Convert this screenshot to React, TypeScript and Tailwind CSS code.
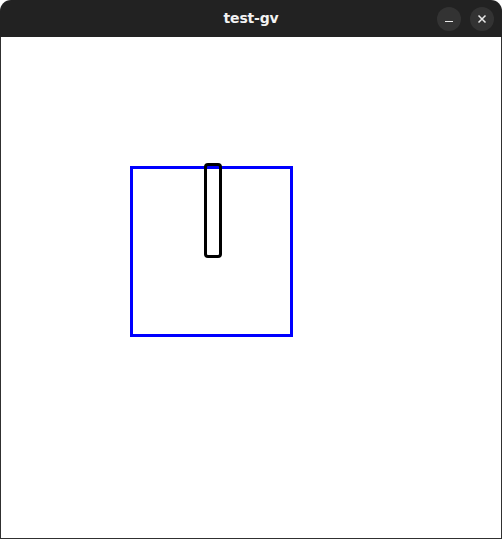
export default function App() {
  return (
    <div className="w-[502px] h-[539px] bg-white flex flex-col" style={{ fontFamily: '"DejaVu Sans", sans-serif' }}>
      {/* title bar */}
      <div className="h-[37px] bg-[#222222] rounded-t-[11px] relative flex items-center justify-center shrink-0">
        <span className="text-[14px] font-bold text-[#f2f2f2] tracking-[-0.2px]">test-gv</span>
        <div className="absolute right-[8px] top-[7px] flex gap-[9px]">
          <button className="w-[24px] h-[24px] rounded-full bg-[#333333] flex items-center justify-center">
            <span className="block w-[8px] h-[1.5px] bg-[#e8e8e8] mt-[5px]" />
          </button>
          <button className="w-[24px] h-[24px] rounded-full bg-[#333333] flex items-center justify-center">
            <svg width="10" height="10" viewBox="0 0 10 10">
              <path d="M1.5 1.5 L8.5 8.5 M8.5 1.5 L1.5 8.5" stroke="#e8e8e8" strokeWidth="1.5" />
            </svg>
          </button>
        </div>
      </div>
      {/* drawing area */}
      <div className="flex-1 border-x border-b border-[#303030] bg-white">
        <svg width="500" height="501" viewBox="1 37 500 501" className="block">
          <rect x="131.5" y="167.5" width="160" height="168" fill="none" stroke="#0000ff" strokeWidth="3" />
          <rect x="205.5" y="164.5" width="15" height="92" rx="2.5" fill="none" stroke="#000000" strokeWidth="3" />
        </svg>
      </div>
    </div>
  );
}
